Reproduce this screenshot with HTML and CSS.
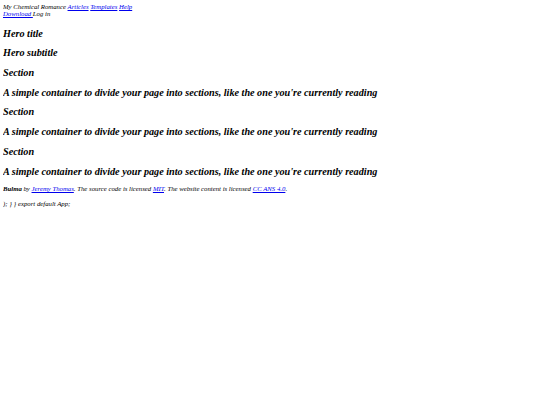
FILE: index.html
```html
<!DOCTYPE html>
<html>
<head>
<meta charset="utf-8">
<link rel="stylesheet" href="styles.css">
</head>
<body>
<nav class="navbar">
  <div class="nav-start">My Chemical Romance <a href="#">Articles</a> <a href="#">Templates</a> <a href="#">Help</a></div>
  <div class="nav-end"><a href="#">Download </a>Log in</div>
</nav>
<section class="hero">
  <h1 class="title">Hero title</h1>
  <h2 class="title">Hero subtitle</h2>
</section>
<section class="section">
  <h2 class="title">Section</h2>
  <h2 class="title">A simple container to divide your page into sections, like the one you're currently reading</h2>
</section>
<section class="section">
  <h2 class="title">Section</h2>
  <h2 class="title">A simple container to divide your page into sections, like the one you're currently reading</h2>
</section>
<section class="section">
  <h2 class="title">Section</h2>
  <h2 class="title">A simple container to divide your page into sections, like the one you're currently reading</h2>
</section>
<footer class="footer">
  <p class="credit"><strong>Bulma</strong> by <a href="#">Jeremy Thomas</a>. The source code is licensed <a href="#">MIT</a>. The website content is licensed <a href="#">CC ANS 4.0</a>.</p>
</footer>
<p class="tail">); } } export default App;</p>
</body>
</html>
```
FILE: styles.css
```css
body {
  margin: 3px;
  font-family: "Liberation Serif", serif;
  font-style: italic;
  font-size: 6.75px;
  color: #000;
}
a { color: #0000ee; }
.title {
  font-size: 10.2px;
  font-weight: bold;
  margin: 8.7px 0;
}
.hero .title:first-child { margin-top: 10.7px; }
.credit { margin: 1em 0; }
.tail { margin: 8px 0; }
```
